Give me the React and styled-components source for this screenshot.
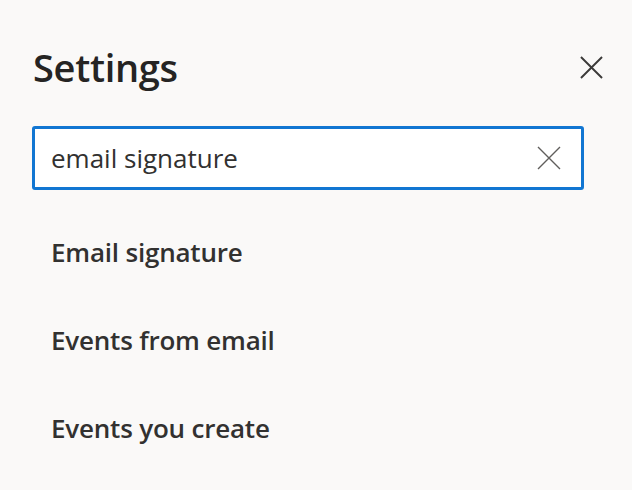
import React from "react";
import styled, { createGlobalStyle } from "styled-components";

const GlobalStyle = createGlobalStyle`
  html, body {
    margin: 0;
    padding: 0;
    background: #faf9f8;
  }
  body {
    font-family: "Open Sans", "Noto Sans", sans-serif;
    color: #323130;
  }
`;

const Panel = styled.div`
  width: 632px;
  height: 490px;
  box-sizing: border-box;
  padding: 36px 26px 0 32px;
  background: #faf9f8;
  overflow: hidden;
`;

const Header = styled.div`
  display: flex;
  align-items: center;
  justify-content: space-between;
  height: 62px;
`;

const Title = styled.h1`
  margin: 0 0 0 1px;
  font-size: 38px;
  font-weight: 600;
  letter-spacing: -0.3px;
  color: #252423;
`;

const IconButton = styled.button`
  border: none;
  background: transparent;
  padding: 0;
  width: 30px;
  height: 30px;
  display: flex;
  align-items: center;
  justify-content: center;
  cursor: pointer;
`;

const SearchBox = styled.div`
  margin-top: 28px;
  width: 552px;
  height: 64px;
  box-sizing: border-box;
  border: 3px solid #1176d2;
  border-radius: 3px;
  background: #fff;
  display: flex;
  align-items: center;
  padding: 0 17px 0 16px;
`;

const SearchInput = styled.input`
  flex: 1;
  border: none;
  outline: none;
  background: transparent;
  font-family: inherit;
  font-size: 26px;
  color: #323130;
  padding: 0;
`;

const Results = styled.ul`
  list-style: none;
  margin: 0;
  padding: 45px 0 0 19px;
  display: flex;
  flex-direction: column;
  gap: 54px;
`;

const ResultItem = styled.li`
  font-size: 26px;
  font-weight: 600;
  line-height: 34px;
  color: #323130;
  letter-spacing: -0.2px;
`;

const CloseIcon = ({ size, stroke, color }) => (
  <svg width={size} height={size} viewBox="0 0 24 24" fill="none">
    <path d="M1 1L23 23M23 1L1 23" stroke={color} strokeWidth={stroke} />
  </svg>
);

export default function App() {
  return (
    <>
      <GlobalStyle />
      <Panel>
        <Header>
          <Title>Settings</Title>
          <IconButton aria-label="Close">
            <CloseIcon size={23} stroke={2} color="#3b3a39" />
          </IconButton>
        </Header>
        <SearchBox>
          <SearchInput defaultValue="email signature" />
          <IconButton aria-label="Clear">
            <CloseIcon size={24} stroke={1.4} color="#605e5c" />
          </IconButton>
        </SearchBox>
        <Results>
          <ResultItem>Email signature</ResultItem>
          <ResultItem>Events from email</ResultItem>
          <ResultItem>Events you create</ResultItem>
        </Results>
      </Panel>
    </>
  );
}
